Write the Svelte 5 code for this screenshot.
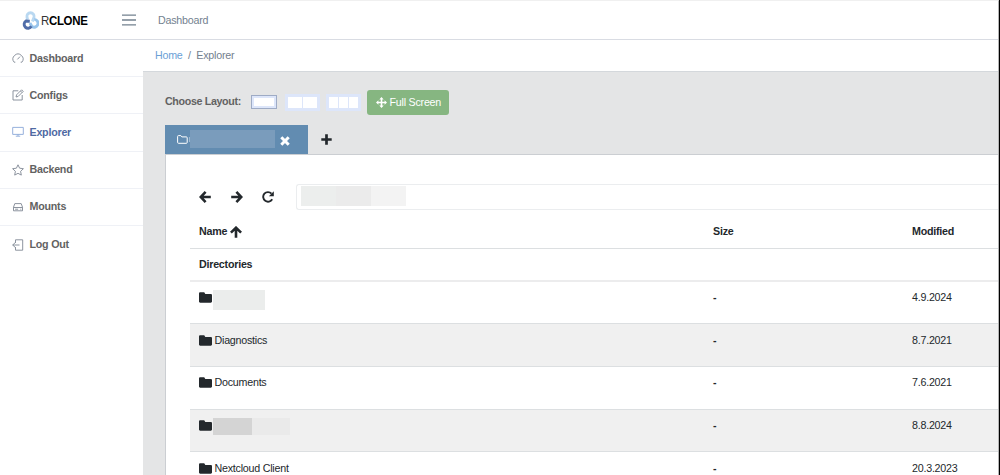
<script lang="ts">
  interface Entry {
    name?: string;
    masks?: { width: number; height: number; color: string }[];
    modified: string;
  }

  const navItems = ['Dashboard', 'Configs', 'Explorer', 'Backend', 'Mounts', 'Log Out'];
  let active = $state('Explorer');
  let layout = $state(1);

  const entries: Entry[] = [
    { masks: [{ width: 52, height: 20, color: '#ebedec' }], modified: '4.9.2024' },
    { name: 'Diagnostics', modified: '8.7.2021' },
    { name: 'Documents', modified: '7.6.2021' },
    {
      masks: [
        { width: 39, height: 17, color: '#d4d4d4' },
        { width: 38, height: 17, color: '#eaeaea' },
      ],
      modified: '8.8.2024',
    },
    { name: 'Nextcloud Client', modified: '20.3.2023' },
  ];
</script>

{#snippet arrow(dir: string)}
  <svg class="arrow {dir}" width="12" height="12" viewBox="0 0 12 12" fill="none" stroke="currentColor" stroke-width="2.6">
    <path d="M6.6 .9L1.7 6l4.9 5.1M1.8 6h10" />
  </svg>
{/snippet}

{#snippet navIcon(name: string)}
  <svg class="nav-icon" width="12" height="12" viewBox="0 0 12 12" fill="none" stroke="currentColor" stroke-width="0.9">
    {#if name === 'Dashboard'}
      <path d="M3.3 10.2H2.1A5 5 0 1 1 9.9 10.2H8.7M5.4 7.4L8 4.6" />
    {:else if name === 'Configs'}
      <path d="M6.3 1.8H1V11h9.2V6M4 8l.6-2.2L9.6.8l1.6 1.6-5 5zM8.5 2l1.5 1.5" />
    {:else if name === 'Explorer'}
      <path d="M.7 1.4h10.6v7H.7zM3.8 10.2h4.4M6 8.5V10" />
    {:else if name === 'Backend'}
      <path d="M6 .8l1.6 3.4 3.8.5-2.8 2.6.7 3.8L6 9.3l-3.3 1.8.7-3.8L.6 4.7l3.8-.5z" />
    {:else if name === 'Mounts'}
      <path d="M1.5 6.2L2.8 2.6h6.4l1.3 3.6v3.6h-9zM1.5 6.5h9M3.1 8.2h3M8.3 8.2h1" />
    {:else}
      <path d="M3.5 4V.8h7.2v10.4H3.5V8M7.5 6H.7M3 3.8L.7 6 3 8.2" />
    {/if}
  </svg>
{/snippet}

<div class="app">
  <header class="topbar">
    <div class="brand">
      <svg width="17" height="19" viewBox="0 0 17 19" fill="none" stroke-width="2.9">
        <path class="logo-top" d="M5.6 8.6L5 6.2A3.6 3.6 0 1 1 12 6.2L10.4 10.4" />
        <path class="logo-right" d="M12.3 8.4a3.9 3.9 0 1 1-2.4 7.1L7.9 12" />
        <path class="logo-left" d="M9.4 15.3A3.9 3.9 0 1 1 4 10L7.8 10.2" />
      </svg>
      <span class="brand-text"><span>R</span><b>CLONE</b></span>
    </div>
    <button class="toggler" aria-label="Toggle sidebar">
      <svg width="14" height="12" viewBox="0 0 14 12" stroke="currentColor" stroke-width="1.3">
        <path d="M0 1.2h14M0 6h14M0 10.8h14" />
      </svg>
    </button>
    <a class="top-link" href="#dashboard">Dashboard</a>
  </header>

  <div class="body">
    <nav class="sidebar">
      {#each navItems as item}
        <button class="nav-item" class:active={active === item} onclick={() => (active = item)}>
          {@render navIcon(item)}
          <span>{item}</span>
        </button>
      {/each}
    </nav>

    <main>
      <div class="breadcrumb"><a href="#home">Home</a><i>/</i><span>Explorer</span></div>

      <div class="content">
        <div class="layout-row">
          <b>Choose Layout:</b>
          {#each [1, 2, 3] as n}
            <button class="layout-btn l{n}" class:selected={layout === n} onclick={() => (layout = n)} aria-label="{n} panes">
              {#each { length: n } as _}<span></span>{/each}
            </button>
          {/each}
          <button class="fullscreen">
            <svg width="11" height="11" viewBox="0 0 11 11" fill="currentColor">
              <path d="M5.5 0l2.2 2.4H6.3v2.3h2.3V3.3L11 5.5 8.6 7.7V6.3H6.3v2.3h1.4L5.5 11 3.3 8.6h1.4V6.3H2.4v1.4L0 5.5l2.4-2.2v1.4h2.3V2.4H3.3z" />
            </svg>
            <span>Full Screen</span>
          </button>
        </div>

        <div class="tabs">
          <div class="tab">
            <svg class="tab-folder" width="11" height="9" viewBox="0 0 11 9" fill="none" stroke="currentColor">
              <path d="M.6 1.5q0-.9.9-.9h2.3l1.1 1.3h4.4q.9 0 .9.9v4.6q0 .9-.9.9H1.5q-.9 0-.9-.9z" />
            </svg>
            <span class="tab-sliver"></span>
            <span class="tab-mask"></span>
            <svg class="close" width="10" height="10" viewBox="0 0 10 10" stroke="currentColor" stroke-width="3">
              <path d="M1.3 1.3l7.4 7.4M8.7 1.3L1.3 8.7" />
            </svg>
          </div>
          <button class="add" aria-label="Add tab">
            <svg width="11" height="11" viewBox="0 0 11 11" stroke="currentColor" stroke-width="2.7">
              <path d="M5.5 .3v10.4M.3 5.5h10.4" />
            </svg>
          </button>
        </div>

        <section class="pane">
          <div class="toolbar">
            {@render arrow('left')}
            {@render arrow('right')}
            <svg width="12" height="12" viewBox="0 0 12 12" fill="none" stroke="currentColor" stroke-width="1.9">
              <path d="M10.2 8.2A4.8 4.8 0 1 1 9.5 2.6" />
              <path class="solid" d="M11.8 .3v4.9H6.9z" />
            </svg>
            <div class="path"><span></span><span></span><span></span></div>
          </div>

          <div class="table">
            <div class="row head">
              <span class="name">Name {@render arrow('up')}</span>
              <span>Size</span>
              <span>Modified</span>
            </div>
            <div class="row group"><span>Directories</span></div>
            {#each entries as entry, i}
              <div class="row entry" class:striped={i % 2 === 1}>
                <span class="name">
                  <svg class="folder" width="13" height="13" viewBox="0 0 512 512" fill="currentColor">
                    <path d="M464 122H248l-42-68H48C22 54 0 75 0 102v308c0 27 22 48 48 48h416c27 0 48-21 48-48V170c0-27-21-48-48-48z" />
                  </svg>
                  {#if entry.name}
                    <span class="label">{entry.name}</span>
                  {:else}
                    <span class="masks">
                      {#each entry.masks ?? [] as m}
                        <span style="width: {m.width}px; height: {m.height}px; background: {m.color}"></span>
                      {/each}
                    </span>
                  {/if}
                </span>
                <b>-</b>
                <span class="date">{entry.modified}</span>
              </div>
            {/each}
          </div>
        </section>
      </div>
    </main>
  </div>
</div>

<style>
  :global(body) {
    background: #000;
  }

  .app {
    box-sizing: border-box;
    width: 999px;
    height: 475px;
    display: flex;
    flex-direction: column;
    overflow: hidden;
    border-top: 1px solid #f0f0f0;
    border-right: 1px solid #b5b5b5;
    background: #fff;
    color: #23282c;
    font: 10.7px/15px "Liberation Sans", Arial, sans-serif;
    letter-spacing: -0.23px;
  }

  button {
    margin: 0;
    padding: 0;
    border: 0;
    background: none;
    color: inherit;
    font: inherit;
    letter-spacing: inherit;
    cursor: pointer;
  }

  a {
    text-decoration: none;
  }

  svg {
    display: block;
    flex: none;
  }

  .topbar {
    box-sizing: border-box;
    flex: none;
    height: 39px;
    display: flex;
    align-items: center;
    border-bottom: 1px solid #d9dce3;
    color: #73818f;
  }

  .brand {
    width: 122px;
    box-sizing: border-box;
    padding-left: 22px;
    display: flex;
    align-items: center;
    gap: 2px;
    color: #000;
  }

  .brand-text {
    display: flex;
    font-size: 13px;
    letter-spacing: -0.35px;
    transform: scaleX(0.88);
    transform-origin: left;
  }

  .brand-text span {
    color: #333;
  }

  .logo-top {
    stroke: #b9d8f1;
  }

  .logo-right {
    stroke: #98c4eb;
  }

  .logo-left {
    stroke: #4f6ca8;
  }

  .toggler {
    width: 36px;
  }

  .top-link {
    color: #73818f;
  }

  .body {
    flex: 1;
    display: flex;
    min-height: 0;
  }

  .sidebar {
    width: 143px;
    flex: none;
  }

  .nav-item {
    box-sizing: border-box;
    width: 100%;
    height: 37.2px;
    padding-left: 12px;
    display: flex;
    align-items: center;
    gap: 5.5px;
    border-bottom: 1px solid #eff1f6;
    color: #626262;
    font-weight: bold;
  }

  .nav-item:last-child {
    border-bottom: 0;
  }

  .nav-item.active {
    color: #4f6aa3;
  }

  .nav-icon {
    color: #808894;
  }

  .active .nav-icon {
    color: #8ba8d8;
  }

  main {
    flex: 1;
    min-width: 0;
    display: flex;
    flex-direction: column;
  }

  .breadcrumb {
    box-sizing: border-box;
    flex: none;
    height: 32px;
    padding-left: 12px;
    display: flex;
    align-items: center;
    border-bottom: 1px solid #d4d8dc;
    color: #73818f;
  }

  .breadcrumb a {
    color: #6b9fd6;
  }

  .breadcrumb i {
    margin: 0 5.5px;
    font-style: normal;
  }

  .content {
    flex: 1;
    min-height: 0;
    padding: 18px 0 0 22px;
    background: #e4e5e6;
  }

  .layout-row {
    height: 24px;
    display: flex;
    align-items: center;
    color: #626262;
  }

  .layout-row b {
    width: 76px;
    margin-bottom: 2px;
    letter-spacing: -0.35px;
    white-space: nowrap;
  }

  .layout-btn {
    box-sizing: border-box;
    height: 17px;
    padding: 3px;
    display: flex;
    gap: 1px;
    background: #dde6fa;
  }

  .layout-btn span {
    flex: 1;
    background: #fff;
  }

  .l1 {
    width: 26px;
    margin-left: 10px;
    height: 14px;
    padding: 2px;
    border: 1px solid transparent;
  }

  .l2 {
    width: 35px;
    margin-left: 7.5px;
  }

  .l3 {
    width: 35px;
    margin: 0 6px 0 6px;
  }

  .selected {
    border-color: #9eabc5;
  }

  .fullscreen {
    box-sizing: border-box;
    width: 82px;
    height: 25px;
    padding-left: 9px;
    display: flex;
    align-items: center;
    gap: 3px;
    border-radius: 3px;
    background: #86b681;
    color: #fff;
    white-space: nowrap;
  }

  .tabs {
    height: 29px;
    margin-top: 11px;
    display: flex;
  }

  .tab {
    box-sizing: border-box;
    width: 143px;
    padding-left: 12px;
    display: flex;
    align-items: center;
    background: #628cb1;
    color: #fff;
  }

  .tab-folder,
  .tab-sliver,
  .tab-mask {
    margin-bottom: 1px;
  }

  .tab-sliver {
    width: 1px;
    height: 5px;
    margin-left: 1px;
    background: #9db8d0;
  }

  .tab-mask {
    width: 85px;
    height: 18px;
    background: #7a9cbc;
  }

  .close {
    margin: 3px 0 0 4.5px;
  }

  .add {
    margin-left: 12.5px;
  }

  .pane {
    height: 330px;
    padding: 29px 0 0 24px;
    border: solid #cbced2;
    border-width: 1px 0 0 1px;
    background: #fff;
  }

  .toolbar {
    height: 26px;
    padding-left: 9px;
    display: flex;
    align-items: center;
    gap: 19.5px;
  }

  .right {
    transform: rotate(180deg);
  }

  .up {
    transform: rotate(90deg);
  }

  .solid {
    fill: currentColor;
    stroke: none;
  }

  .path {
    box-sizing: border-box;
    flex: 1;
    height: 26px;
    margin-left: 2px;
    padding: 1px 4px;
    display: flex;
    border: 1px solid #ebedef;
    border-right: 0;
    border-radius: 3px 0 0 3px;
  }

  .path span {
    width: 35px;
    height: 20px;
    background: #eceeed;
  }

  .path span:nth-child(2) {
    background: #ebebeb;
  }

  .path span:nth-child(3) {
    background: #f3f3f3;
  }

  .table {
    margin-top: 5px;
  }

  .row {
    box-sizing: border-box;
    padding-left: 9px;
    display: grid;
    grid-template-columns: 514px 199px 1fr;
    border-bottom: 1px solid #dcdfe1;
  }

  .head,
  .group {
    align-items: center;
    font-weight: bold;
  }

  .head {
    height: 34px;
  }

  .group {
    height: 32.5px;
    border-bottom: 2px solid #ececed;
  }

  .name {
    display: flex;
    gap: 3px;
  }

  .head .name {
    align-items: center;
  }

  .entry {
    height: 42.7px;
    padding-top: 8.5px;
  }

  .striped {
    background: #f0f0f0;
  }

  .folder {
    margin-top: 1px;
  }

  .entry .name {
    gap: 2.5px;
  }

  .masks {
    display: flex;
    margin-left: -2px;
  }
</style>
